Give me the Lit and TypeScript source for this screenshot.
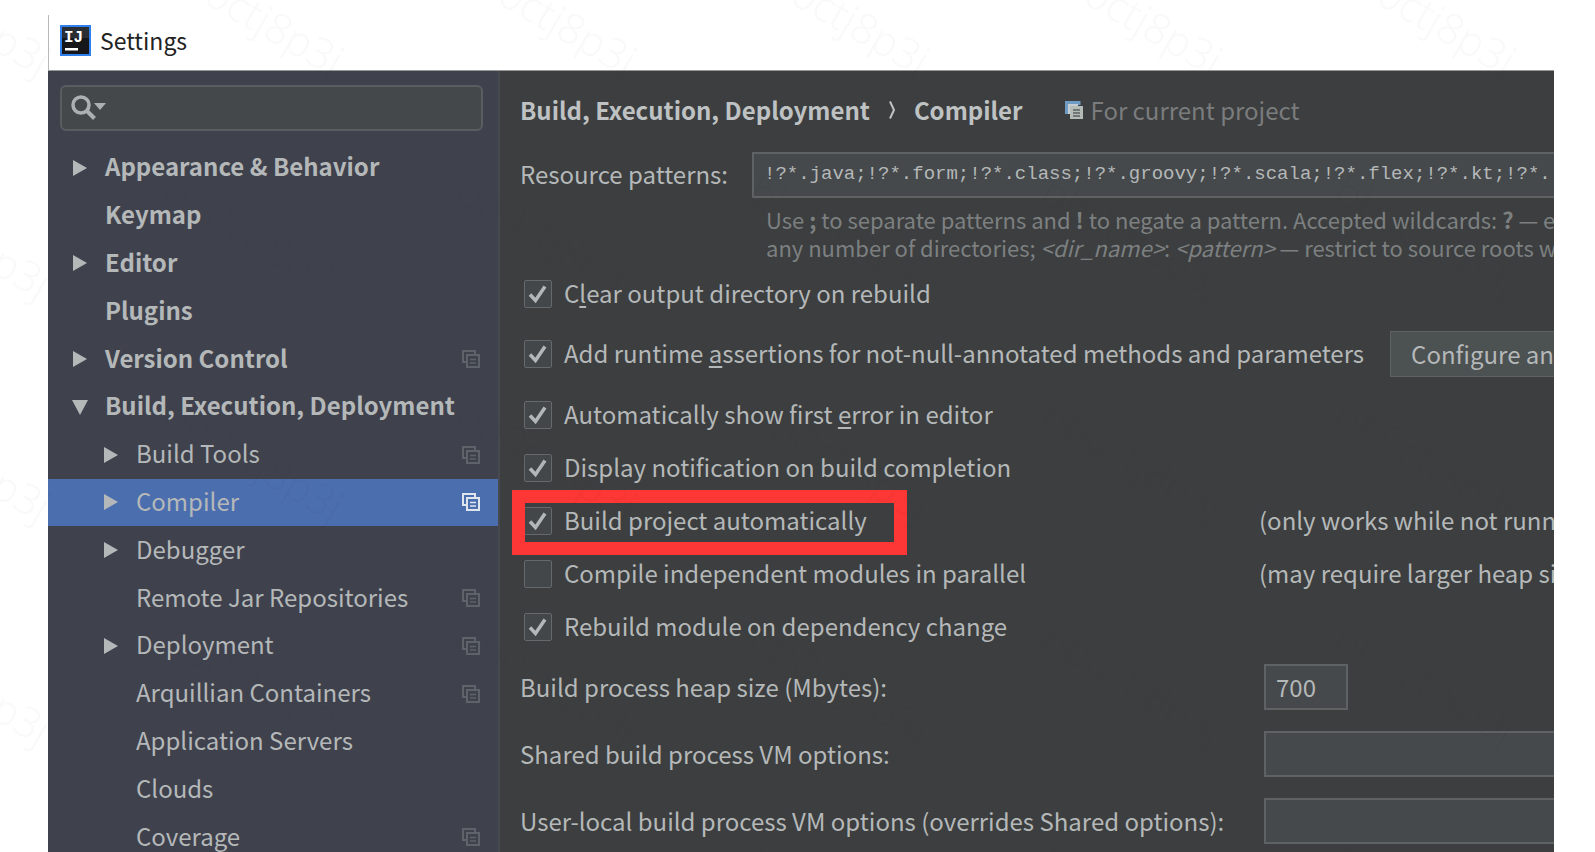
import { LitElement, html, css, svg, nothing, TemplateResult } from "lit";
import { customElement, state } from "lit/decorators.js";
import { classMap } from "lit/directives/class-map.js";

interface TreeNode {
  label: string;
  level: 0 | 1;
  arrow?: "right" | "down";
  project?: boolean;
}

const TREE: TreeNode[] = [
  { label: "Appearance & Behavior", level: 0, arrow: "right" },
  { label: "Keymap", level: 0 },
  { label: "Editor", level: 0, arrow: "right" },
  { label: "Plugins", level: 0 },
  { label: "Version Control", level: 0, arrow: "right", project: true },
  { label: "Build, Execution, Deployment", level: 0, arrow: "down" },
  { label: "Build Tools", level: 1, arrow: "right", project: true },
  { label: "Compiler", level: 1, arrow: "right", project: true },
  { label: "Debugger", level: 1, arrow: "right" },
  { label: "Remote Jar Repositories", level: 1, project: true },
  { label: "Deployment", level: 1, arrow: "right", project: true },
  { label: "Arquillian Containers", level: 1, project: true },
  { label: "Application Servers", level: 1 },
  { label: "Clouds", level: 1 },
  { label: "Coverage", level: 1, project: true },
];

interface Option {
  id: string;
  label: TemplateResult;
  checked: boolean;
  note?: string;
  action?: string;
  marked?: boolean;
}

const OPTIONS: Option[] = [
  { id: "clear", label: html`C<u>l</u>ear output directory on rebuild`, checked: true },
  {
    id: "assertions",
    label: html`Add runtime <u>a</u>ssertions for not-null-annotated methods and parameters`,
    checked: true,
    action: "Configure annotations...",
  },
  { id: "first-error", label: html`Automatically show first <u>e</u>rror in editor`, checked: true },
  { id: "notify", label: html`Display notification on build completion`, checked: true },
  {
    id: "auto",
    label: html`Build project automatically`,
    checked: true,
    note: "(only works while not running / debugging)",
    marked: true,
  },
  {
    id: "parallel",
    label: html`Compile independent modules in parallel`,
    checked: false,
    note: "(may require larger heap size)",
  },
  { id: "rebuild", label: html`Rebuild module on dependency change`, checked: true },
];

const arrowIcon = (dir: "right" | "down") => html`<svg width="16" height="18" viewBox="0 0 16 18" aria-hidden="true">
  ${dir === "right" ? svg`<path d="M1 1v16l14-8z" fill="currentColor" />` : svg`<path d="M0 2h16l-8 15z" fill="currentColor" />`}
</svg>`;

const copyIcon = html`<svg width="18" height="18" viewBox="0 0 18 18" fill="none" stroke="currentColor" stroke-width="2" aria-hidden="true">
  <path d="M4 12H1V1h12v3" />
  <path d="M5 5h12v12H5z" />
  <path d="M8 9.500h6M8 13h6" stroke-width="1.500" />
</svg>`;

const scopeIcon = html`<svg width="18" height="18" viewBox="0 0 18 18" aria-hidden="true">
  <path d="M1.500 13V1.500H14V4" fill="none" stroke="#6f9cc4" stroke-width="3" />
  <path d="M3 3h10v2H5v8H3z" fill="#c3cdd2" />
  <path d="M5 5h13v13H5z" fill="#b4bcb8" />
  <path d="M8 9h7M8 12h7M8 15h7" stroke="#59605f" stroke-width="1.500" />
</svg>`;

@customElement("app-root")
export class AppRoot extends LitElement {
  static styles = css`
    :host {
      display: block;
      position: relative;
      box-sizing: border-box;
      height: 100vh;
      overflow: hidden;
      padding: 15px 41px 0 48px;
      background: #fff;
      color: #b5b8b9;
      font-family: "Noto Sans CJK SC", "Open Sans", sans-serif;
      font-size: 24px;
      line-height: 32px;
    }
    input,
    button {
      box-sizing: border-box;
      margin: 0;
      font: inherit;
      color: inherit;
      outline: none;
    }
    .window {
      display: flex;
      flex-direction: column;
      height: 100%;
      overflow: hidden;
    }
    .titlebar {
      display: flex;
      align-items: center;
      gap: 9px;
      flex: none;
      box-sizing: border-box;
      height: 56px;
      padding: 0 11px 5px;
      border-left: 1px solid #b9b9b9;
      border-bottom: 1px solid #979998;
      color: #222;
    }
    .title {
      margin: 0;
      font-size: 23px;
      font-weight: 400;
    }
    .body {
      display: flex;
      flex: 1;
      min-height: 0;
    }
    .sidebar {
      flex: none;
      box-sizing: border-box;
      width: 452px;
      overflow: hidden;
      background: #3f424d;
      border-right: 2px solid #464a4e;
    }
    .search {
      display: flex;
      align-items: center;
      box-sizing: border-box;
      height: 46px;
      margin: 14px 15px 13px 12px;
      border: 2px solid #595d5f;
      border-radius: 6px;
      background: #44484a;
      color: #adb0b1;
    }
    .search svg {
      flex: none;
      margin-left: 9px;
    }
    .search input {
      flex: 1;
      min-width: 0;
      border: 0;
      background: transparent;
    }
    .tree {
      display: grid;
      grid-auto-rows: 1fr;
      height: 717px;
      margin: 0;
      padding: 0;
      list-style: none;
    }
    .node {
      display: flex;
      align-items: center;
      width: 100%;
      height: 100%;
      padding: 0 18px 0 24px;
      border: 0;
      background: transparent;
      text-align: left;
      white-space: nowrap;
    }
    .node.top {
      font-weight: 700;
    }
    .node.nested {
      padding-left: 55px;
    }
    .node.selected {
      background: #4b6eaf;
    }
    .arrow {
      display: flex;
      flex: none;
      width: 33px;
    }
    .node .name {
      flex: 1;
      padding-bottom: 3px;
    }
    .badge {
      display: flex;
      color: #5d6368;
    }
    .selected .badge {
      color: #dfe5ef;
    }
    .main {
      flex: 1;
      min-width: 0;
      overflow: hidden;
      padding-left: 20px;
      background: #3c3e3f;
      white-space: nowrap;
    }
    .crumbs {
      display: flex;
      align-items: center;
      height: 77px;
    }
    .crumbs h2 {
      display: flex;
      align-items: center;
      gap: 17px;
      margin: 0;
      font-size: 24px;
      font-weight: 700;
      color: #bfc2c3;
    }
    .scope {
      display: flex;
      align-items: center;
      gap: 8px;
      margin-left: 42px;
      color: #7a7c7d;
    }
    .patterns {
      display: grid;
      grid-template-columns: 232px 1fr;
      align-items: center;
      margin-top: 4px;
    }
    .patterns label,
    .option span {
      padding-bottom: 2px;
    }
    .field {
      height: 46px;
      min-width: 0;
      padding: 0 10px 2px;
      border: 2px solid #5f6263;
      border-right-width: 0;
      border-radius: 0;
      background: #45494b;
    }
    .field.mono {
      font-family: "Liberation Mono", monospace;
      font-size: 19px;
    }
    .field.short {
      width: 84px;
      border-right-width: 2px;
    }
    .hint {
      grid-column: 2;
      margin: 7px 0 0 14px;
      font-size: 22px;
      line-height: 28px;
      color: #7d8081;
    }
    .options {
      margin: 6px 0 0;
      padding: 0;
      list-style: none;
    }
    .option {
      display: grid;
      grid-template-columns: 739px 1fr;
      align-items: center;
      height: 53px;
    }
    .option.tall {
      display: flex;
      gap: 26px;
      height: 68px;
    }
    .check {
      position: relative;
      display: flex;
      align-items: center;
      justify-self: start;
      height: 100%;
      gap: 12px;
      padding-left: 4px;
    }
    .check u {
      text-decoration-thickness: 2px;
      text-underline-offset: 3px;
      text-decoration-skip-ink: none;
    }
    .option .box {
      display: grid;
      place-items: center;
      padding: 0;
    }
    .box input {
      grid-area: 1 / 1;
      appearance: none;
      width: 28px;
      height: 28px;
      border: 1px solid #65696b;
      border-radius: 2px;
      background: #43474a;
    }
    .box svg {
      grid-area: 1 / 1;
      visibility: hidden;
      pointer-events: none;
    }
    .box input:checked + svg {
      visibility: visible;
    }
    .option .frame {
      position: absolute;
      inset: -4px -40px -8px -8px;
      padding: 0;
      border: 13px solid #fd3735;
      pointer-events: none;
    }
    .button {
      flex: none;
      height: 46px;
      padding: 0 20px;
      border: 1px solid #5e6263;
      background: #4c5152;
    }
    .params {
      display: grid;
      grid-template-columns: 744px 1fr;
      row-gap: 21px;
      align-items: center;
      margin-top: 11px;
    }
    .watermark {
      position: absolute;
      inset: 0;
      width: 100%;
      height: 100%;
      pointer-events: none;
    }
  `;

  @state() private selected = "Compiler";

  private renderNode(n: TreeNode) {
    const cls = { node: true, top: n.level === 0, nested: n.level === 1, selected: n.label === this.selected };
    return html`<li>
      <button class=${classMap(cls)} @click=${() => (this.selected = n.label)}>
        <span class="arrow">${n.arrow ? arrowIcon(n.arrow) : nothing}</span>
        <span class="name">${n.label}</span>
        ${n.project ? html`<span class="badge">${copyIcon}</span>` : nothing}
      </button>
    </li>`;
  }

  private renderOption(o: Option) {
    return html`<li class=${classMap({ option: true, tall: !!o.action })}>
      <label class="check">
        <span class="box">
          <input type="checkbox" id=${o.id} .checked=${o.checked} />
          <svg width="20" height="20" viewBox="0 0 20 20" aria-hidden="true">
            <path d="M2 10.500l5.500 6L17 2.500" fill="none" stroke="#b4b7b8" stroke-width="3.500" />
          </svg>
        </span>
        <span>${o.label}</span>
        ${o.marked ? html`<span class="frame"></span>` : nothing}
      </label>
      ${o.note ? html`<span>${o.note}</span>` : nothing}
      ${o.action ? html`<button class="button">${o.action}</button>` : nothing}
    </li>`;
  }

  render() {
    return html`
      <div class="window">
        <header class="titlebar">
          <svg width="31" height="31" viewBox="0 0 31 31" aria-hidden="true">
            <rect width="31" height="31" fill="#2f7fec" />
            <rect x="2" y="2" width="27" height="27" fill="#15171b" />
            <rect x="2" y="2" width="27" height="11" fill="#2b2e33" />
            <text x="4" y="17" font-family="Liberation Mono" font-weight="700" font-size="16" fill="#fff">IJ</text>
            <rect x="5" y="23" width="13" height="2.500" fill="#fff" />
          </svg>
          <h1 class="title">Settings</h1>
        </header>
        <div class="body">
          <nav class="sidebar">
            <div class="search">
              <svg width="36" height="26" viewBox="0 0 36 26" aria-hidden="true">
                <circle cx="10" cy="10" r="8" fill="none" stroke="currentColor" stroke-width="3.500" />
                <path d="M15.500 15.500l8 8" stroke="currentColor" stroke-width="4" />
                <path d="M23 8h12l-6 7z" fill="currentColor" />
              </svg>
              <input type="text" aria-label="Search settings" />
            </div>
            <ul class="tree">
              ${TREE.map((n) => this.renderNode(n))}
            </ul>
          </nav>
          <main class="main">
            <div class="crumbs">
              <h2>
                <span>Build, Execution, Deployment</span>
                <svg width="10" height="20" viewBox="0 0 10 20" aria-hidden="true">
                  <path d="M3 1.500l4 8.500-4 8.500" fill="none" stroke="currentColor" stroke-width="2" />
                </svg>
                <span>Compiler</span>
              </h2>
              <span class="scope">${scopeIcon}<span>For current project</span></span>
            </div>
            <div class="patterns">
              <label for="patterns">Resource patterns:</label>
              <input
                id="patterns"
                class="field mono"
                type="text"
                value="!?*.java;!?*.form;!?*.class;!?*.groovy;!?*.scala;!?*.flex;!?*.kt;!?*."
              />
              <p class="hint">
                Use <b>;</b> to separate patterns and <b>!</b> to negate a pattern. Accepted wildcards: <b>?</b> — exactly<br />
                any number of directories; <i>&lt;dir_name&gt;</i>: <i>&lt;pattern&gt;</i> — restrict to source roots with
              </p>
            </div>
            <ul class="options">
              ${OPTIONS.map((o) => this.renderOption(o))}
            </ul>
            <div class="params">
              <label for="heap">Build process heap size (Mbytes):</label>
              <input id="heap" class="field short" type="text" value="700" />
              <label for="shared">Shared build process VM options:</label>
              <input id="shared" class="field" type="text" />
              <label for="local">User-local build process VM options (overrides Shared options):</label>
              <input id="local" class="field" type="text" />
            </div>
          </main>
        </div>
      </div>
      <svg class="watermark" aria-hidden="true">
        <defs>
          <pattern id="mark" width="293" height="223" patternUnits="userSpaceOnUse" patternTransform="translate(139 160)">
            <text
              transform="translate(20 40) rotate(30)"
              font-family="Open Sans"
              font-weight="300"
              font-size="42"
              fill="#000"
              fill-opacity="0.022"
            >bb0ctj8p3j</text>
          </pattern>
        </defs>
        <rect width="100%" height="100%" fill="url(#mark)" />
      </svg>
    `;
  }
}
